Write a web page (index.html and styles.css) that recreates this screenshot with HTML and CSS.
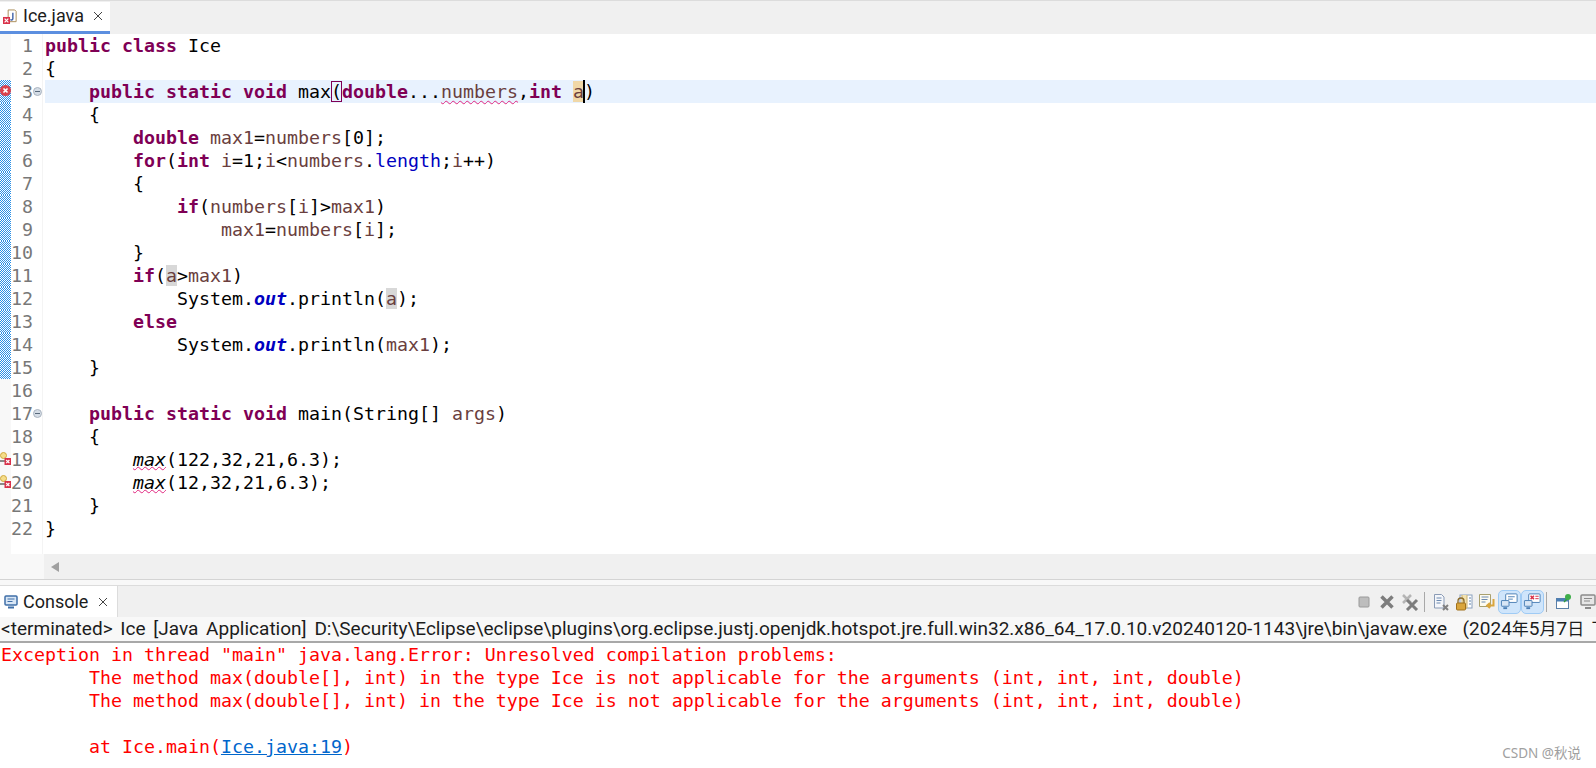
FILE: index.html
```html
<!DOCTYPE html>
<html lang="en">
<head>
<meta charset="utf-8">
<title>Ice.java</title>
<link rel="stylesheet" href="styles.css">
</head>
<body>
<div class="tabbar top">
  <div class="tab editor-tab">
    <svg class="tab-icon" width="15" height="15" viewBox="0 0 16 16"><path d="M5.500 1h7l1.500 1.500v11h-8.500z" fill="#fff" stroke="#a98b55"/><path d="M10.500 4v6.500c0 1.500-2 1.500-2.500.5" fill="none" stroke="#3f62a8" stroke-width="1.500"/><rect x="0" y="8.500" width="7.500" height="7.500" fill="#d9324a"/><path d="M1.700 10.200l4 4m0-4l-4 4" stroke="#fff" stroke-width="1.300"/></svg>
    <span class="tab-label">Ice.java</span>
    <svg class="close" width="10" height="10" viewBox="0 0 10 10"><path d="M1 1l8 8m0-8l-8 8" stroke="#444" stroke-width="1"/></svg>
  </div>
</div>
<main class="editor">
  <div class="row"><span class="ruler"></span><span class="num">1</span><span class="fold"></span><code class="code"><b>public</b> <b>class</b> Ice</code></div>
  <div class="row"><span class="ruler"></span><span class="num">2</span><span class="fold"></span><code class="code">{</code></div>
  <div class="row"><span class="ruler mark"><svg class="err" width="11" height="11" viewBox="0 0 12 12"><circle cx="6" cy="6" r="6" fill="#d8434f"/><path d="M3.800 3.800l4.400 4.400m0-4.400l-4.400 4.400" stroke="#fff" stroke-width="1.800"/></svg></span><span class="num">3</span><span class="fold"><i class="fold-btn"></i></span><code class="code current">    <b>public</b> <b>static</b> <b>void</b> max<span class="bracket">(</span><b>double</b>...<span class="var sq">numbers</span>,<b>int</b> <span class="var decl">a</span><span class="caret"></span>)</code></div>
  <div class="row"><span class="ruler mark"></span><span class="num">4</span><span class="fold"></span><code class="code">    {</code></div>
  <div class="row"><span class="ruler mark"></span><span class="num">5</span><span class="fold"></span><code class="code">        <b>double</b> <span class="var">max1</span>=<span class="var">numbers</span>[0];</code></div>
  <div class="row"><span class="ruler mark"></span><span class="num">6</span><span class="fold"></span><code class="code">        <b>for</b>(<b>int</b> <span class="var">i</span>=1;<span class="var">i</span>&lt;<span class="var">numbers</span>.<span class="field">length</span>;<span class="var">i</span>++)</code></div>
  <div class="row"><span class="ruler mark"></span><span class="num">7</span><span class="fold"></span><code class="code">        {</code></div>
  <div class="row"><span class="ruler mark"></span><span class="num">8</span><span class="fold"></span><code class="code">            <b>if</b>(<span class="var">numbers</span>[<span class="var">i</span>]&gt;<span class="var">max1</span>)</code></div>
  <div class="row"><span class="ruler mark"></span><span class="num">9</span><span class="fold"></span><code class="code">                <span class="var">max1</span>=<span class="var">numbers</span>[<span class="var">i</span>];</code></div>
  <div class="row"><span class="ruler mark"></span><span class="num">10</span><span class="fold"></span><code class="code">        }</code></div>
  <div class="row"><span class="ruler mark"></span><span class="num">11</span><span class="fold"></span><code class="code">        <b>if</b>(<span class="var occ">a</span>&gt;<span class="var">max1</span>)</code></div>
  <div class="row"><span class="ruler mark"></span><span class="num">12</span><span class="fold"></span><code class="code">            System.<em class="static">out</em>.println(<span class="var occ">a</span>);</code></div>
  <div class="row"><span class="ruler mark"></span><span class="num">13</span><span class="fold"></span><code class="code">        <b>else</b></code></div>
  <div class="row"><span class="ruler mark"></span><span class="num">14</span><span class="fold"></span><code class="code">            System.<em class="static">out</em>.println(<span class="var">max1</span>);</code></div>
  <div class="row"><span class="ruler mark"></span><span class="num">15</span><span class="fold"></span><code class="code">    }</code></div>
  <div class="row"><span class="ruler"></span><span class="num">16</span><span class="fold"></span><code class="code"></code></div>
  <div class="row"><span class="ruler"></span><span class="num">17</span><span class="fold"><i class="fold-btn"></i></span><code class="code">    <b>public</b> <b>static</b> <b>void</b> main(String[] <span class="var">args</span>)</code></div>
  <div class="row"><span class="ruler"></span><span class="num">18</span><span class="fold"></span><code class="code">    {</code></div>
  <div class="row"><span class="ruler"><svg class="fix" width="11" height="14" viewBox="0 0 11 14"><circle cx="3.500" cy="3.500" r="3" fill="#f5dd8a" stroke="#d0a83c"/><rect x="0" y="8" width="5" height="2" fill="#8a8a8a"/><rect x="4.500" y="6" width="6.500" height="7" fill="#d9324a"/><path d="M6.200 8l3.200 3.200m0-3.200l-3.200 3.200" stroke="#fff" stroke-width="1.200"/></svg></span><span class="num">19</span><span class="fold"></span><code class="code">        <em class="sq wave-low">max</em>(122,32,21,6.3);</code></div>
  <div class="row"><span class="ruler"><svg class="fix" width="11" height="14" viewBox="0 0 11 14"><circle cx="3.500" cy="3.500" r="3" fill="#f5dd8a" stroke="#d0a83c"/><rect x="0" y="8" width="5" height="2" fill="#8a8a8a"/><rect x="4.500" y="6" width="6.500" height="7" fill="#d9324a"/><path d="M6.200 8l3.200 3.200m0-3.200l-3.200 3.200" stroke="#fff" stroke-width="1.200"/></svg></span><span class="num">20</span><span class="fold"></span><code class="code">        <em class="sq wave-low">max</em>(12,32,21,6.3);</code></div>
  <div class="row"><span class="ruler"></span><span class="num">21</span><span class="fold"></span><code class="code">    }</code></div>
  <div class="row"><span class="ruler"></span><span class="num">22</span><span class="fold"></span><code class="code">}</code></div>
  <div class="row fill"><span class="ruler"></span><span class="num"></span><span class="fold"></span><span class="code"></span></div>
</main>
<div class="hscroll">
  <span class="hscroll-corner"></span>
  <span class="hscroll-track"><i class="arrow"></i></span>
</div>
<div class="sash"></div>
<div class="tabbar console-bar">
  <div class="tab console-tab">
    <svg class="tab-icon" width="14" height="14" viewBox="0 0 14 14"><rect x="1" y="1" width="12" height="9" rx="1" fill="#d8e6f5" stroke="#3f6fa8" stroke-width="1.500"/><path d="M3.500 4h7M3.500 6.500h5" stroke="#3f6fa8"/><path d="M4 12.500h6" stroke="#3f6fa8" stroke-width="2"/></svg>
    <span class="tab-label">Console</span>
    <svg class="close" width="10" height="10" viewBox="0 0 10 10"><path d="M1 1l8 8m0-8l-8 8" stroke="#444" stroke-width="1"/></svg>
  </div>
  <div class="toolbar">
    <span class="tool"><svg width="16" height="16" viewBox="0 0 16 16"><rect x="3" y="3" width="10" height="10" rx="1" fill="#bdbdbd" stroke="#9a9a9a"/></svg></span>
    <span class="tool"><svg width="16" height="16" viewBox="0 0 16 16"><path d="M2.500 2.500l11 11m0-11l-11 11" stroke="#7d7d7d" stroke-width="3.500"/></svg></span>
    <span class="tool"><svg width="18" height="18" viewBox="0 0 18 18"><path d="M2 2l8 8m0-8l-8 8" stroke="#b5b5b5" stroke-width="2.500"/><path d="M6 7l10 10m0-10L6 17" stroke="#7d7d7d" stroke-width="3"/></svg></span>
    <i class="sep sep-a"></i>
    <span class="tool"><svg width="18" height="18" viewBox="0 0 18 18"><path d="M2.500 1.500h7l2.500 2.500v11h-9.500z" fill="#f4f6fa" stroke="#8a9bb5"/><path d="M4.500 5h5M4.500 7.500h5M4.500 10h4" stroke="#6c8ab0"/><path d="M11 12l5 5m0-5l-5 5" stroke="#808080" stroke-width="2"/></svg></span>
    <span class="tool"><svg width="18" height="18" viewBox="0 0 18 18"><rect x="5" y="2" width="12" height="13" fill="#fff" stroke="#8aa0bd"/><path d="M7 2v13h5V2" fill="#f2e2b0" stroke="#c9b070"/><path d="M14 5h2M14 8h2M14 11h2" stroke="#5f82ad"/><path d="M3 10V8a3 3 0 0 1 6 0v2" fill="none" stroke="#8a6a2a" stroke-width="1.300"/><rect x="1.500" y="10" width="9" height="7" rx="1" fill="#d9a53c" stroke="#a0701c"/></svg></span>
    <span class="tool"><svg width="18" height="18" viewBox="0 0 18 18"><path d="M1.500 1.500h11v12h-11z" fill="#fdfbf0" stroke="#a9a06e"/><path d="M3.500 4h7M3.500 6.500h6M3.500 9h4" stroke="#6c8ab0"/><path d="M15.500 6v6.500h-6M12 10l-2.800 2.500 2.800 2.500" fill="none" stroke="#d9a53c" stroke-width="2"/></svg></span>
    <span class="tool on"><svg width="19" height="19" viewBox="0 0 20 20"><rect x="6" y="2" width="12" height="9" rx="1" fill="#fff" stroke="#4b7fb5"/><path d="M8.500 5h7M8.500 7.500h5" stroke="#4b7fb5"/><rect x="1.500" y="9" width="8" height="6" rx=".5" fill="#d8e6f5" stroke="#4b7fb5"/><path d="M3.500 17h4" stroke="#4b7fb5" stroke-width="2"/></svg></span>
    <span class="tool on"><svg width="19" height="19" viewBox="0 0 20 20"><rect x="6" y="2" width="12" height="9" rx="1" fill="#fff" stroke="#4b7fb5"/><path d="M8 4l3.500 3.500m0-3.500L8 7.500" stroke="#d9324a" stroke-width="1.500"/><path d="M13 4.500h3.500M13 7h3.500" stroke="#d9324a"/><rect x="1.500" y="9" width="8" height="6" rx=".5" fill="#d8e6f5" stroke="#4b7fb5"/><path d="M3.500 17h4" stroke="#4b7fb5" stroke-width="2"/></svg></span>
    <i class="sep sep-b"></i>
    <span class="tool"><svg width="18" height="18" viewBox="0 0 18 18"><rect x="1.500" y="5.500" width="12" height="10" fill="#fff" stroke="#5a7fa8"/><rect x="1.500" y="5.500" width="12" height="3" fill="#4b7fb5"/><path d="M9 9l6-6" stroke="#2f9a3c" stroke-width="1.500"/><circle cx="13" cy="4" r="3" fill="#3fae4a"/></svg></span>
    <span class="tool last"><svg width="18" height="18" viewBox="0 0 18 18"><rect x="2" y="2" width="14" height="10" rx="1" fill="#e6e6e6" stroke="#8a8a8a" stroke-width="1.500"/><path d="M5 5.500h8M5 8h6" stroke="#8a8a8a"/><path d="M6 15h6" stroke="#8a8a8a" stroke-width="2"/></svg></span>
  </div>
</div>
<div class="status">&lt;terminated&gt; Ice [Java Application] D:\Security\Eclipse\eclipse\plugins\org.eclipse.justj.openjdk.hotspot.jre.full.win32.x86_64_17.0.10.v20240120-1143\jre\bin\javaw.exe  (2024<span class="cjk">年</span>5<span class="cjk">月</span>7<span class="cjk">日 下</span></div>
<pre class="output">Exception in thread "main" java.lang.Error: Unresolved compilation problems: 
	The method max(double[], int) in the type Ice is not applicable for the arguments (int, int, int, double)
	The method max(double[], int) in the type Ice is not applicable for the arguments (int, int, int, double)

	at Ice.main(<a class="link">Ice.java:19</a>)</pre>
<div class="watermark">CSDN @秋说</div>
</body>
</html>
```

FILE: styles.css
```css
* { box-sizing: border-box; }
html, body { margin: 0; height: 768px; overflow: hidden; background: #fff; }
body { position: relative; display: flex; flex-direction: column; font-family: Roboto, "Noto Sans CJK SC", sans-serif; color: #000; }

.tabbar { display: flex; background: #f0f0f0; flex: none; }
.top { height: 34px; padding-top: 1px; border-top: 1px solid #dcdcdc; }
.tab { display: flex; align-items: center; background: #fff; font-size: 18px; color: #1c1c1c; }
.tab-label { line-height: 24px; }
.editor-tab { width: 110px; height: 32px; padding: 0 0 1px 3px; border-bottom: 3px solid #5c8fe0; }
.editor-tab .tab-icon { margin-right: 5px; }
.close { margin-left: 9px; }

.editor { flex: none; height: 520px; display: flex; flex-direction: column; }
.row { display: flex; height: 23px; flex: none; }
.row.fill { flex: 1; }
.ruler { width: 11px; flex: none; background: #f8f8f8; position: relative; }
.mark { background: repeating-conic-gradient(#2a8fe6 0 25%, #fff 0 50%) 0 0 / 2px 2px; }
.err { position: absolute; left: 0; top: 5px; }
.fix { position: absolute; left: 0; top: 4px; }
.num { width: 22px; flex: none; text-align: right; font: 18.27px/23px "DejaVu Sans Mono", monospace; color: #787878; }
.fold { width: 10px; flex: none; display: flex; justify-content: flex-start; align-items: center; border-right: 1px solid #f4f4f4; }
.fold-btn { width: 9px; height: 9px; border-radius: 50%; background: #d5dde6; border: 1px solid #aab4c0; position: relative; }
.fold-btn::after { content: ""; position: absolute; left: 1px; right: 1px; top: 3px; height: 1px; background: #5a6a7c; }
.code { flex: 1; margin-left: 2px; white-space: pre; font: 18.27px/23px "DejaVu Sans Mono", monospace; color: #000; }
.current { background: #e8f2fe; }
.code b { color: #7f0055; font-weight: 700; }
.var { color: #6a3e3e; }
.field { color: #0000c0; }
.static { color: #0000c0; font-weight: 700; font-style: italic; }
.code em { font-style: italic; }
.sq { text-decoration: underline wavy #e0267f 1px; text-underline-offset: 2px; }
.sq.wave-low { text-underline-offset: 0; }
.bracket { outline: 1px solid #7f0055; outline-offset: -1px; }
.decl { background: #f0d8a8; }
.occ { background: #d8d8d8; }
.caret { display: inline-block; width: 2px; height: 23px; margin: 0 -1px; background: #000; vertical-align: top; position: relative; }

.hscroll { flex: none; height: 25px; display: flex; }
.hscroll-corner { width: 44px; background: #f8f8f8; }
.hscroll-track { flex: 1; background: #f0f0f0; display: flex; align-items: center; padding-left: 7px; }
.arrow { width: 0; height: 0; border-style: solid; border-width: 5.500px 8px 5.500px 0; border-color: transparent #a0a0a0 transparent transparent; }
.sash { flex: none; height: 6px; background: #f8f8f8; border-top: 1px solid #d4d4d4; }

.console-bar { height: 32px; align-items: stretch; border-top: 1px solid #dcdcdc; }
.console-tab { width: 118px; padding-left: 4px; border-right: 1px solid #dcdcdc; }
.console-tab .tab-icon { margin-right: 5px; }
.console-tab .close { margin-left: 10px; }
.toolbar { margin-left: auto; margin-right: -3px; display: flex; align-items: center; }
.tool { width: 23px; height: 24px; display: flex; align-items: center; justify-content: center; border: 1px solid transparent; border-radius: 5px; }
.tool.on { background: #cfe5fb; border-color: #9fcbf5; }
.tool.last { margin-left: 1px; }
.sep { width: 1px; height: 20px; background: #a8a8a8; }
.sep-a { margin: 0 4px 0 3px; }
.sep-b { margin: 0 5px 0 2px; }

.status { flex: none; height: 26px; font-size: 19.05px; word-spacing: 3px; line-height: 24px; padding-left: 1px; white-space: pre; overflow: hidden; background: #f8f8f8; color: #1c1c1c; border-bottom: 2px solid #a8a8a8; }
.cjk { font-size: 17px; }
.output { flex: 1; margin: 0; padding-left: 1px; font: 18.27px/23px "DejaVu Sans Mono", monospace; color: #ff0000; tab-size: 8; overflow: hidden; }
.link { color: #0066cc; text-decoration: underline; }
.watermark { position: absolute; right: 15px; top: 745px; font-family: "Noto Sans", "Noto Sans CJK SC", sans-serif; font-size: 13.500px; line-height: 16px; color: #a0a0a0; }
```
